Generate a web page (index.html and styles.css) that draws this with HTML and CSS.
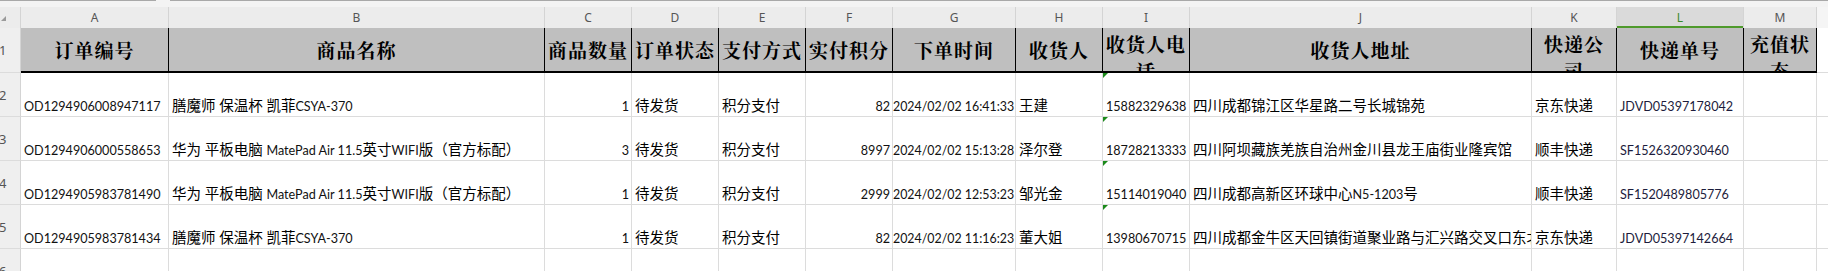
FILE: index.html
```html
<!DOCTYPE html>
<html lang="zh-CN">
<head>
<meta charset="utf-8">
<title>订单导出</title>
<link rel="stylesheet" href="styles.css">
</head>
<body>
<div class="topbar"><div class="namebox"></div><div class="gap"></div><div class="formula"></div></div>
<div class="sheet">
  <div class="corner"><span class="tri"></span></div>
  <div class="ch">A</div>
  <div class="ch">B</div>
  <div class="ch">C</div>
  <div class="ch">D</div>
  <div class="ch">E</div>
  <div class="ch">F</div>
  <div class="ch">G</div>
  <div class="ch">H</div>
  <div class="ch">I</div>
  <div class="ch">J</div>
  <div class="ch">K</div>
  <div class="ch sel">L</div>
  <div class="ch">M</div>
  <div class="ch end"></div>

  <div class="rh">1</div>
  <div class="hd">订单编号</div>
  <div class="hd">商品名称</div>
  <div class="hd">商品数量</div>
  <div class="hd">订单状态</div>
  <div class="hd">支付方式</div>
  <div class="hd">实付积分</div>
  <div class="hd">下单时间</div>
  <div class="hd">收货人</div>
  <div class="hd w"><span>收货人电<br>话</span></div>
  <div class="hd">收货人地址</div>
  <div class="hd w"><span>快递公<br>司</span></div>
  <div class="hd">快递单号</div>
  <div class="hd w"><span>充值状<br>态</span></div>
  <div class="hn"></div>

  <div class="rh">2</div>
  <div class="c">OD1294906008947117</div>
  <div class="c"><span class="zh">膳魔师 保温杯 凯菲</span>CSYA-370</div>
  <div class="c r">1</div>
  <div class="c"><span class="zh">待发货</span></div>
  <div class="c"><span class="zh">积分支付</span></div>
  <div class="c r">82</div>
  <div class="c r dt">2024/02/02 16:41:33</div>
  <div class="c"><span class="zh">王建</span></div>
  <div class="c tx">15882329638</div>
  <div class="c"><span class="zh">四川成都锦江区华星路二号长城锦苑</span></div>
  <div class="c"><span class="zh">京东快递</span></div>
  <div class="c code">JDVD05397178042</div>
  <div class="c"></div>
  <div class="c end"></div>

  <div class="rh">3</div>
  <div class="c">OD1294906000558653</div>
  <div class="c"><span class="zh">华为 平板电脑 </span>MatePad Air 11.5<span class="zh">英寸</span>WIFI<span class="zh">版（官方标配）</span></div>
  <div class="c r">3</div>
  <div class="c"><span class="zh">待发货</span></div>
  <div class="c"><span class="zh">积分支付</span></div>
  <div class="c r">8997</div>
  <div class="c r dt">2024/02/02 15:13:28</div>
  <div class="c"><span class="zh">泽尔登</span></div>
  <div class="c tx">18728213333</div>
  <div class="c"><span class="zh">四川阿坝藏族羌族自治州金川县龙王庙街业隆宾馆</span></div>
  <div class="c"><span class="zh">顺丰快递</span></div>
  <div class="c code">SF1526320930460</div>
  <div class="c"></div>
  <div class="c end"></div>

  <div class="rh">4</div>
  <div class="c">OD1294905983781490</div>
  <div class="c"><span class="zh">华为 平板电脑 </span>MatePad Air 11.5<span class="zh">英寸</span>WIFI<span class="zh">版（官方标配）</span></div>
  <div class="c r">1</div>
  <div class="c"><span class="zh">待发货</span></div>
  <div class="c"><span class="zh">积分支付</span></div>
  <div class="c r">2999</div>
  <div class="c r dt">2024/02/02 12:53:23</div>
  <div class="c"><span class="zh">邹光金</span></div>
  <div class="c tx">15114019040</div>
  <div class="c"><span class="zh">四川成都高新区环球中心</span>N5-1203<span class="zh">号</span></div>
  <div class="c"><span class="zh">顺丰快递</span></div>
  <div class="c code">SF1520489805776</div>
  <div class="c"></div>
  <div class="c end"></div>

  <div class="rh">5</div>
  <div class="c">OD1294905983781434</div>
  <div class="c"><span class="zh">膳魔师 保温杯 凯菲</span>CSYA-370</div>
  <div class="c r">1</div>
  <div class="c"><span class="zh">待发货</span></div>
  <div class="c"><span class="zh">积分支付</span></div>
  <div class="c r">82</div>
  <div class="c r dt">2024/02/02 11:16:23</div>
  <div class="c"><span class="zh">董大姐</span></div>
  <div class="c tx">13980670715</div>
  <div class="c"><span class="zh">四川成都金牛区天回镇街道聚业路与汇兴路交叉口东北角</span></div>
  <div class="c"><span class="zh">京东快递</span></div>
  <div class="c code">JDVD05397142664</div>
  <div class="c"></div>
  <div class="c end"></div>

  <div class="rh">6</div>
  <div class="c"></div>
  <div class="c"></div>
  <div class="c"></div>
  <div class="c"></div>
  <div class="c"></div>
  <div class="c"></div>
  <div class="c"></div>
  <div class="c"></div>
  <div class="c"></div>
  <div class="c"></div>
  <div class="c"></div>
  <div class="c"></div>
  <div class="c"></div>
  <div class="c end"></div>
</div>
</body>
</html>
```
FILE: styles.css
```css
* { box-sizing: border-box; margin: 0; padding: 0; }
html, body { width: 1828px; height: 271px; overflow: hidden; background: #fff; }
body { font-family: Lato, "Noto Sans CJK SC", sans-serif; }

.topbar { display: flex; height: 7px; background: #f3f3f3; }
.namebox { width: 156px; border-top: 1px solid #a8a8a8; }
.gap { width: 14px; }
.formula { flex: 1; border-top: 1px solid #a8a8a8; }

.sheet {
  display: grid;
  grid-template-columns: 21px 148px 376px 87px 87px 87px 87px 123px 87px 87px 342px 85px 127px 73px 1fr;
  grid-template-rows: 21px 45px repeat(5, 44px);
}

.corner { background: #ececec; border-right: 1px solid #d4d4d4; }
.tri {
  display: block; width: 0; height: 0;
  border-left: 5px solid transparent;
  border-bottom: 5px solid #9a9a9a;
  margin: 9px 0 0 1px;
}

.ch {
  background: #ececec;
  border-right: 1px solid #d4d4d4;
  font: 12px/21px "Noto Sans", sans-serif;
  color: #555;
  text-align: center;
}
.ch.sel { background: #dadada; color: #3a8a2a; box-shadow: inset 0 -2px 0 #4f9a2c; }
.ch.end { background: #f5f5f5; border-right: 0; }

.rh {
  background: #efefef;
  border-right: 1px solid #d4d4d4;
  border-bottom: 1px solid #dcdcdc;
  font: 13px "Noto Sans", sans-serif;
  color: #555;
  display: flex;
  align-items: center;
  text-indent: -1px;
  overflow: hidden;
}

.hd {
  background: #bfbfbf;
  border-right: 1px solid #000;
  border-bottom: 2px solid #000;
  display: flex;
  align-items: center;
  justify-content: center;
  font: 700 19px/27px "Noto Serif CJK SC", "Noto Sans CJK SC", serif;
  letter-spacing: 1px;
  color: #000;
  overflow: hidden;
  white-space: nowrap;
}
.hd.w { align-items: flex-start; padding-top: 2px; text-align: center; }
.hd.w span { display: block; }
.hn { border-bottom: 1px solid #dcdcdc; }

.c {
  border-right: 1px solid #dcdcdc;
  border-bottom: 1px solid #dcdcdc;
  padding: 25px 2px 0 3px;
  font-size: 12.6px;
  line-height: 18px;
  white-space: nowrap;
  overflow: hidden;
  color: #111;
}
.c .zh { font-size: 14.5px; line-height: 14px; color: #000; }
.c.r { text-align: right; padding-right: 2px; }
.c.dt { padding-left: 0; padding-right: 1px; font-size: 12.4px; }
.c.end { border-right: 0; }
.c.code { color: #1c1c3c; }
.c.tx { position: relative; }
.c.tx::before {
  content: "";
  position: absolute;
  left: 0;
  top: 0;
  border-top: 5px solid #1b8a1b;
  border-right: 5px solid transparent;
}
```
